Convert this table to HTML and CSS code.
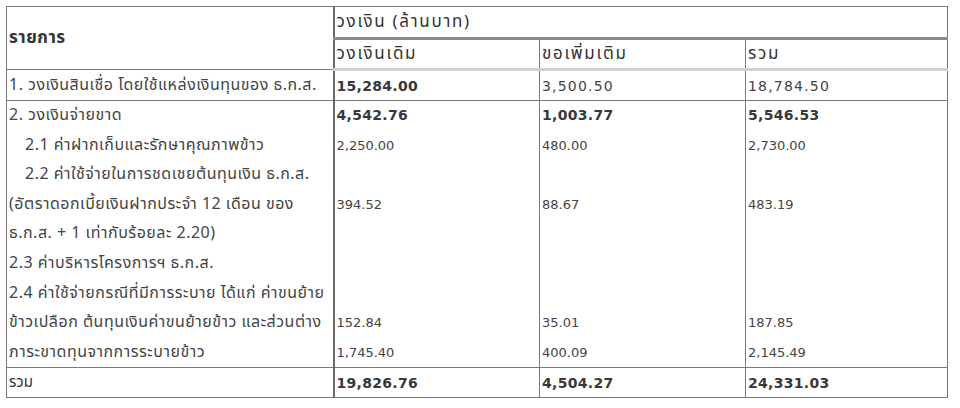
FILE: index.html
```html
<!DOCTYPE html>
<html lang="th">
<head>
<meta charset="utf-8">
<link rel="stylesheet" href="styles.css">
</head>
<body>
<div class="page">
  <table class="budget">
    <colgroup>
      <col class="c-item"><col class="c-num"><col class="c-num"><col class="c-sum">
    </colgroup>
    <thead>
      <tr class="h1">
        <th rowspan="2" class="item-head">รายการ</th>
        <th colspan="3" class="group-head">วงเงิน (ล้านบาท)</th>
      </tr>
      <tr class="h2">
        <th class="sub-head">วงเงินเดิม</th>
        <th class="sub-head">ขอเพิ่มเติม</th>
        <th class="sub-head">รวม</th>
      </tr>
    </thead>
    <tbody>
      <tr class="r-single">
        <td class="txt">1. วงเงินสินเชื่อ โดยใช้แหล่งเงินทุนของ ธ.ก.ส.</td>
        <td class="num bold">15,284.00</td>
        <td class="num wide">3,500.50</td>
        <td class="num wide">18,784.50</td>
      </tr>
      <tr class="r-multi">
        <td class="txt">
          <div class="ln">2. วงเงินจ่ายขาด</div>
          <div class="ln indent">2.1 ค่าฝากเก็บและรักษาคุณภาพข้าว</div>
          <div class="ln indent">2.2 ค่าใช้จ่ายในการชดเชยต้นทุนเงิน ธ.ก.ส.</div>
          <div class="ln">(อัตราดอกเบี้ยเงินฝากประจำ 12 เดือน ของ</div>
          <div class="ln">ธ.ก.ส. + 1 เท่ากับร้อยละ 2.20)</div>
          <div class="ln">2.3 ค่าบริหารโครงการฯ ธ.ก.ส.</div>
          <div class="ln">2.4 ค่าใช้จ่ายกรณีที่มีการระบาย ได้แก่ ค่าขนย้าย</div>
          <div class="ln">ข้าวเปลือก ต้นทุนเงินค่าขนย้ายข้าว และส่วนต่าง</div>
          <div class="ln">ภาระขาดทุนจากการระบายข้าว</div>
        </td>
        <td class="num">
          <div class="ln bold">4,542.76</div>
          <div class="ln">2,250.00</div>
          <div class="ln"></div>
          <div class="ln">394.52</div>
          <div class="ln"></div>
          <div class="ln"></div>
          <div class="ln"></div>
          <div class="ln">152.84</div>
          <div class="ln">1,745.40</div>
        </td>
        <td class="num">
          <div class="ln bold">1,003.77</div>
          <div class="ln">480.00</div>
          <div class="ln"></div>
          <div class="ln">88.67</div>
          <div class="ln"></div>
          <div class="ln"></div>
          <div class="ln"></div>
          <div class="ln">35.01</div>
          <div class="ln">400.09</div>
        </td>
        <td class="num">
          <div class="ln bold">5,546.53</div>
          <div class="ln">2,730.00</div>
          <div class="ln"></div>
          <div class="ln">483.19</div>
          <div class="ln"></div>
          <div class="ln"></div>
          <div class="ln"></div>
          <div class="ln">187.85</div>
          <div class="ln">2,145.49</div>
        </td>
      </tr>
      <tr class="r-single r-total">
        <td class="txt total-label">รวม</td>
        <td class="num bold">19,826.76</td>
        <td class="num bold">4,504.27</td>
        <td class="num bold">24,331.03</td>
      </tr>
    </tbody>
  </table>
</div>
</body>
</html>
```

FILE: styles.css
```css
html, body {
  margin: 0;
  padding: 0;
  background: #ffffff;
}

.page {
  padding: 6px 0 0 6px;
  font-family: Tahoma, "Noto Sans Thai", "Noto Sans Thai UI", "Noto Sans", "DejaVu Sans", sans-serif;
  color: #3a3a3a;
}

.budget {
  border-collapse: collapse;
  table-layout: fixed;
  width: 941px;
  border: 1px solid #8a8a8a;
}

.c-item { width: 327px; }
.c-num { width: 206px; }
.c-sum { width: 202px; }

.budget th,
.budget td {
  border: 1px solid #7a7a7a;
  padding: 0 0 0 2px;
  text-align: left;
  vertical-align: middle;
  font-weight: normal;
  overflow: hidden;
  white-space: nowrap;
}

.budget td:first-child,
.budget th.item-head {
  border-right: 2px solid #6a6a6a;
}

.h1 th { height: 30px; }
.h2 th { height: 28px; }

.budget thead tr.h1 .group-head {
  border-bottom: 3px solid #8a8a8a;
}

.budget thead tr.h2 th {
  border-bottom: 3px solid #cfcfcf;
}

.item-head {
  font-weight: bold !important;
  font-size: 17px;
  letter-spacing: 0.5px;
  color: #333;
}

.group-head,
.sub-head {
  font-size: 17px;
  letter-spacing: 1.7px;
  color: #333;
}

.r-single td { height: 29px; }

.txt {
  font-size: 16px;
  letter-spacing: 0.5px;
  color: #444;
}

.num {
  font-family: "DejaVu Sans", Verdana, sans-serif;
  font-size: 13px;
  color: #444;
}

.num.wide {
  font-size: 14px;
  letter-spacing: 1.2px;
}

.num.bold,
.ln.bold {
  font-family: "DejaVu Sans", Verdana, sans-serif;
  font-weight: bold;
  font-size: 14px;
  letter-spacing: 0.3px;
  color: #383838;
}

.r-multi td {
  vertical-align: top;
  padding-top: 0;
  padding-bottom: 0;
}

.ln {
  height: 29.6px;
  line-height: 29.6px;
}

.indent {
  padding-left: 16px;
}

.total-label {
  font-weight: bold;
  font-size: 15px;
  letter-spacing: 0;
  color: #333;
}
```
